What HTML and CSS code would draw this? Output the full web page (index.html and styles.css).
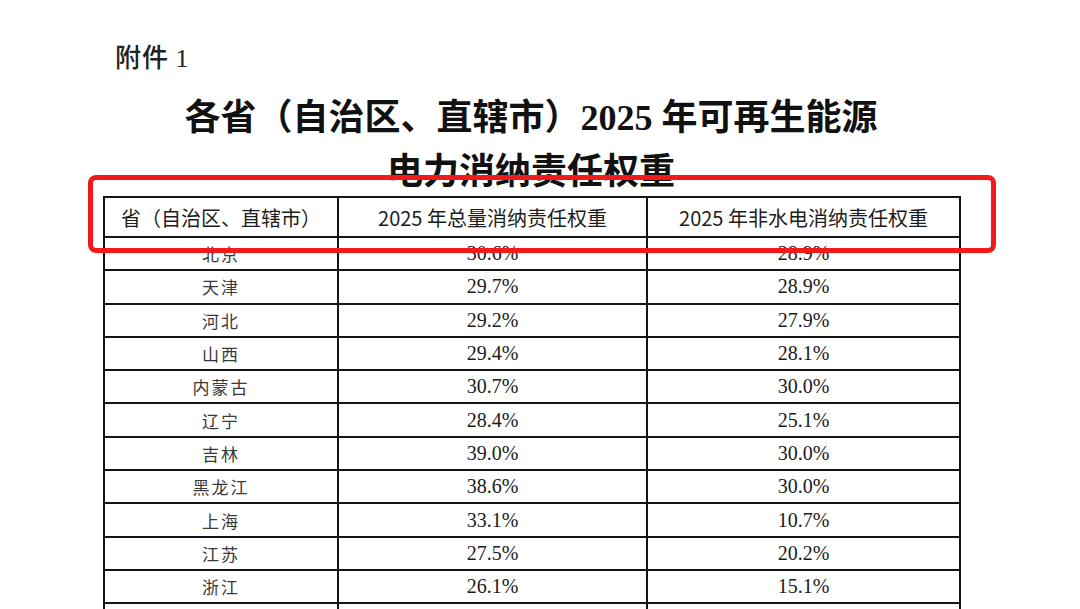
FILE: index.html
```html
<!DOCTYPE html>
<html lang="zh-CN">
<head>
<meta charset="utf-8">
<title>附件 1</title>
<link rel="stylesheet" href="styles.css">
</head>
<body>
<div class="doc">
  <div class="annex"><span class="annex-cn">附件</span> <span class="annex-num">1</span></div>
  <h1 class="title">各省（自治区、直辖市）2025 年可再生能源<br>电力消纳责任权重</h1>
  <table class="grid">
    <colgroup>
      <col class="c1"><col class="c2"><col class="c3">
    </colgroup>
    <thead>
      <tr class="head">
        <th>省（自治区、直辖市）</th>
        <th>2025 年总量消纳责任权重</th>
        <th>2025 年非水电消纳责任权重</th>
      </tr>
    </thead>
    <tbody>
      <tr><td class="prov">北京</td><td>30.6%</td><td>28.9%</td></tr>
      <tr><td class="prov">天津</td><td>29.7%</td><td>28.9%</td></tr>
      <tr><td class="prov">河北</td><td>29.2%</td><td>27.9%</td></tr>
      <tr><td class="prov">山西</td><td>29.4%</td><td>28.1%</td></tr>
      <tr><td class="prov">内蒙古</td><td>30.7%</td><td>30.0%</td></tr>
      <tr><td class="prov">辽宁</td><td>28.4%</td><td>25.1%</td></tr>
      <tr><td class="prov">吉林</td><td>39.0%</td><td>30.0%</td></tr>
      <tr><td class="prov">黑龙江</td><td>38.6%</td><td>30.0%</td></tr>
      <tr><td class="prov">上海</td><td>33.1%</td><td>10.7%</td></tr>
      <tr><td class="prov">江苏</td><td>27.5%</td><td>20.2%</td></tr>
      <tr><td class="prov">浙江</td><td>26.1%</td><td>15.1%</td></tr>
      <tr class="tail"><td></td><td></td><td></td></tr>
    </tbody>
  </table>
</div>
<div class="highlight"></div>
</body>
</html>
```

FILE: styles.css
```css
html, body {
  margin: 0;
  padding: 0;
  background: #ffffff;
}
body {
  width: 1080px;
  height: 609px;
  overflow: hidden;
  position: relative;
  color: #141414;
  font-family: "Liberation Serif", "Noto Sans CJK SC", serif;
}
.doc {
  width: 856px;
  margin-left: 103px;
  padding-top: 40px;
  display: flex;
  flex-direction: column;
}
.annex {
  margin-left: 12px;
  font-size: 26px;
  line-height: 31px;
  height: 31px;
  color: #222;
}
.annex-cn {
  font-family: "Noto Sans CJK SC", sans-serif;
  font-weight: 500;
  letter-spacing: 1px;
}
.annex-num {
  font-family: "Liberation Serif", serif;
}
.title {
  margin: 20px 0 0 0;
  text-align: center;
  font-family: "Liberation Serif", "Noto Sans CJK SC", serif;
  font-weight: 700;
  font-size: 36px;
  line-height: 54px;
  color: #111;
}
.grid {
  margin-top: -3px;
  border-collapse: collapse;
  table-layout: fixed;
  width: 856px;
}
.c1 { width: 234px; }
.c2 { width: 309px; }
.c3 { width: 313px; }
.grid th, .grid td {
  border: 2px solid #151515;
  padding: 0;
  text-align: center;
  vertical-align: middle;
}
.grid th {
  height: 38px;
  font-family: "Noto Sans CJK SC", sans-serif;
  font-weight: 400;
  font-size: 20px;
  color: #1c1c1c;
}
.grid td {
  height: 31.3px;
  font-family: "Liberation Serif", serif;
  font-size: 20px;
  color: #1a1a1a;
}
.grid td.prov {
  font-family: "Noto Sans CJK SC", sans-serif;
  font-size: 17px;
  letter-spacing: 2px;
  color: #3a3a3a;
}
.highlight {
  position: absolute;
  left: 88px;
  top: 175px;
  width: 898px;
  height: 68px;
  border: 5px solid #f2191b;
  border-radius: 8px;
}
```
